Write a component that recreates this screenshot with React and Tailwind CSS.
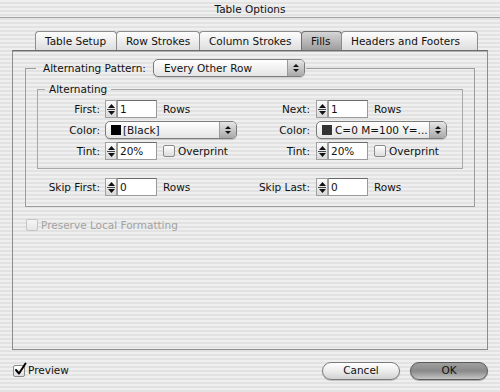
import React from "react";

function UpDown() {
  return (
    <div className="flex flex-col items-center gap-[2px]">
      <svg width="6" height="3" viewBox="0 0 6 3"><path d="M3 0L6 3H0z" fill="#111" /></svg>
      <svg width="6" height="3" viewBox="0 0 6 3"><path d="M0 0H6L3 3z" fill="#111" /></svg>
    </div>
  );
}

function Spinner() {
  return (
    <div className="w-[12px] h-[18px] border border-[#a0a0a0] bg-gradient-to-b from-[#fbfbfb] to-[#d9d9d9] flex flex-col items-center justify-center gap-[1px]">
      <svg width="7" height="4" viewBox="0 0 7 4"><path d="M3.5 0L7 4H0z" fill="#111" /></svg>
      <div className="w-[8px] h-px bg-[#444]" />
      <svg width="7" height="4" viewBox="0 0 7 4"><path d="M0 0H7L3.5 4z" fill="#111" /></svg>
    </div>
  );
}

function SpinField({ value }) {
  return (
    <div className="flex items-center">
      <Spinner />
      <div className="h-[18px] w-[40px] bg-white border border-[#9a9a9a] border-t-[#6a6a6a] pl-[2px] flex items-center">
        {value}
      </div>
    </div>
  );
}

function Popup({ w, children }) {
  return (
    <div className={`${w} h-[18px] rounded-[5px] border border-[#7c7c7c] bg-gradient-to-b from-white to-[#e4e4e4] flex items-stretch overflow-hidden shadow-[0_1px_1px_rgba(0,0,0,0.15)]`}>
      <div className="flex-1 flex items-center pl-[5px] whitespace-nowrap overflow-hidden">{children}</div>
      <div className="w-[17px] border-l border-[#9a9a9a] bg-gradient-to-b from-[#e6e6e6] to-[#a9a9a9] flex items-center justify-center">
        <UpDown />
      </div>
    </div>
  );
}

function Checkbox({ checked, disabled }) {
  return (
    <div
      className={
        disabled
          ? "w-[12px] h-[12px] rounded-[2px] border border-[#c4c4c4] bg-gradient-to-b from-[#f6f6f6] to-[#e6e6e6] relative"
          : "w-[12px] h-[12px] rounded-[2px] border border-[#8a8a8a] bg-gradient-to-b from-white to-[#dcdcdc] relative"
      }
    >
      {checked && (
        <svg className="absolute left-[0px] top-[-4px]" width="13" height="14" viewBox="0 0 13 14">
          <path d="M2 8L5 11.5L11.5 1.5" stroke="#000" strokeWidth="2" fill="none" strokeLinecap="round" strokeLinejoin="round" />
        </svg>
      )}
    </div>
  );
}

function Row({ labelW, l1, c1, l2, c2 }) {
  return (
    <div className="flex items-center h-[18px]">
      <div className={`${labelW} text-right`}>{l1}</div>
      <div className="w-[150px] pl-[5px] flex items-center">{c1}</div>
      <div className="w-[60px] text-right">{l2}</div>
      <div className="pl-[6px] flex items-center">{c2}</div>
    </div>
  );
}

function Tab({ w, selected, children, first }) {
  return (
    <div
      className={
        selected
          ? `${w} h-[19px] -ml-px rounded-t-[4px] border border-b-0 border-[#6f6f6f] bg-gradient-to-b from-[#d6d6d6] to-[#9d9d9d] flex items-center pl-[9px]`
          : `${w} h-[19px] ${first ? "" : "-ml-px"} rounded-t-[4px] border border-b-0 border-[#8c8c8c] bg-gradient-to-b from-[#fdfdfd] to-[#dedede] flex items-center pl-[9px]`
      }
    >
      {children}
    </div>
  );
}

export default function App() {
  return (
    <div className="w-[500px] h-[392px] overflow-hidden font-['DejaVu_Sans',sans-serif] text-[10.5px] leading-none text-[#111] bg-[repeating-linear-gradient(180deg,#efefef_0px,#efefef_2px,#e2e2e2_2px,#e2e2e2_4px)]">
      <div className="h-[18px] border-b border-[#a3a3a3] flex items-center justify-center pt-[1px]">
        Table Options
      </div>

      <div className="flex mt-[13px] ml-[35px] h-[19px]">
        <Tab w="w-[82px]" first>Table Setup</Tab>
        <Tab w="w-[84px]">Row Strokes</Tab>
        <Tab w="w-[103px]">Column Strokes</Tab>
        <Tab w="w-[41px]" selected>Fills</Tab>
        <Tab w="w-[137px]">Headers and Footers</Tab>
      </div>

      <div className="mx-[12px] h-[300px] border border-[#8c8c8c] border-t-[#6c6c6c] shadow-[inset_0_1px_0_#b0b0b0] pt-[8px] px-[12px]">
        <fieldset className="border border-[#9c9c9c] px-[11px] pb-[10px]">
          <legend className="-ml-px pl-[7px] pr-[1px]">
            <div className="flex items-center gap-[7px]">
              <span>Alternating Pattern:</span>
              <Popup w="w-[152px]">
                <span className="pl-[5px]">Every Other Row</span>
              </Popup>
            </div>
          </legend>

          <fieldset className="border border-[#a8a8a8] pb-[8px] mt-[6px]">
            <legend className="ml-[7px] px-[4px] leading-[12px]">Alternating</legend>
            <div className="flex flex-col gap-[3px] pt-[5px]">
              <Row
                labelW="w-[62px]"
                l1="First:"
                c1={<><SpinField value="1" /><span className="ml-[6px]">Rows</span></>}
                l2="Next:"
                c2={<><SpinField value="1" /><span className="ml-[6px]">Rows</span></>}
              />
              <Row
                labelW="w-[62px]"
                l1="Color:"
                c1={
                  <Popup w="w-[132px]">
                    <div className="w-[10px] h-[10px] bg-black mr-[2px]" />
                    <span>[Black]</span>
                  </Popup>
                }
                l2="Color:"
                c2={
                  <Popup w="w-[131px]">
                    <div className="w-[10px] h-[10px] bg-[#333] mr-[3px]" />
                    <span>C=0 M=100 Y=...</span>
                  </Popup>
                }
              />
              <Row
                labelW="w-[62px]"
                l1="Tint:"
                c1={<><SpinField value="20%" /><div className="ml-[6px]"><Checkbox /></div><span className="ml-[3px]">Overprint</span></>}
                l2="Tint:"
                c2={<><SpinField value="20%" /><div className="ml-[6px]"><Checkbox /></div><span className="ml-[3px]">Overprint</span></>}
              />
            </div>
          </fieldset>

          <div className="mt-[9px]">
            <Row
              labelW="w-[63px]"
              l1="Skip First:"
              c1={<><SpinField value="0" /><span className="ml-[6px]">Rows</span></>}
              l2="Skip Last:"
              c2={<><SpinField value="0" /><span className="ml-[6px]">Rows</span></>}
            />
          </div>
        </fieldset>

        <div className="flex items-center mt-[12px] pl-[1px]">
          <Checkbox disabled />
          <span className="ml-[3px] text-[#a2a2a2]">Preserve Local Formatting</span>
        </div>
      </div>

      <div className="h-[41px] flex items-center justify-between pl-[13px] pr-[12px]">
        <div className="flex items-center">
          <Checkbox checked />
          <span className="ml-[3px]">Preview</span>
        </div>
        <div className="flex items-center gap-[10px]">
          <div className="w-[78px] h-[18px] rounded-full border border-[#7a7a7a] bg-gradient-to-b from-white via-[#ececec] to-[#d2d2d2] flex items-center justify-center shadow-[0_1px_1px_rgba(0,0,0,0.2)]">
            Cancel
          </div>
          <div className="w-[78px] h-[18px] rounded-full border border-[#5a5a5a] bg-gradient-to-b from-[#9e9e9e] via-[#8a8a8a] to-[#c6c6c6] flex items-center justify-center shadow-[0_1px_1px_rgba(0,0,0,0.3)]">
            OK
          </div>
        </div>
      </div>
    </div>
  );
}
